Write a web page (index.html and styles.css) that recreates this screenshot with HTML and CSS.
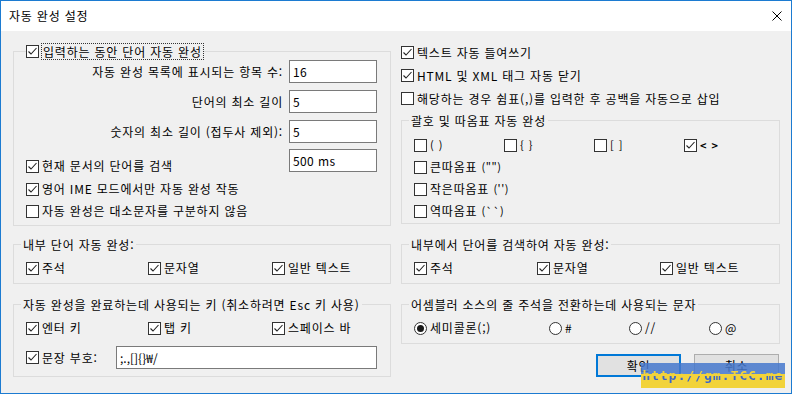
FILE: index.html
```html
<!DOCTYPE html>
<html lang="ko">
<head>
<meta charset="utf-8">
<title>자동 완성 설정</title>
<link rel="stylesheet" href="styles.css">
</head>
<body>
<div class="window">
  <div class="titlebar">
    <span class="title">자동 완성 설정</span>
    <span class="close"><svg width="10" height="10" viewBox="0 0 10 10"><path d="M0.5 0.5 L9.5 9.5 M9.5 0.5 L0.5 9.5" stroke="#000" stroke-width="1" fill="none"/></svg></span>
  </div>
  <div class="body">
    <div class="col left">
      <div class="group g1">
        <div class="legend legend-cb">
          <span class="box"><svg width="11" height="11" viewBox="0 0 11 11"><path d="M1.5 5.5 L4 8 L9.5 2" stroke="#222" stroke-width="1.1" fill="none"/></svg></span>
          <span class="focus">입력하는 동안 단어 자동 완성</span>
        </div>
        <div class="field"><span class="flabel">자동 완성 목록에 표시되는 항목 수:</span><span class="input">16</span></div>
        <div class="field gap7"><span class="flabel">단어의 최소 길이</span><span class="input">5</span></div>
        <div class="field gap7"><span class="flabel">숫자의 최소 길이 (접두사 제외):</span><span class="input">5</span></div>
        <div class="field split">
          <label class="cbrow low"><span class="box"><svg width="11" height="11" viewBox="0 0 11 11"><path d="M1.5 5.5 L4 8 L9.5 2" stroke="#222" stroke-width="1.1" fill="none"/></svg></span><span class="txt">현재 문서의 단어를 검색</span></label>
          <span class="input">500 ms</span>
        </div>
        <label class="cbrow r22 first"><span class="box"><svg width="11" height="11" viewBox="0 0 11 11"><path d="M1.5 5.5 L4 8 L9.5 2" stroke="#222" stroke-width="1.1" fill="none"/></svg></span><span class="txt">영어 IME 모드에서만 자동 완성 작동</span></label>
        <label class="cbrow r22"><span class="box"></span><span class="txt">자동 완성은 대소문자를 구분하지 않음</span></label>
      </div>

      <div class="group g2">
        <div class="legend">내부 단어 자동 완성:</div>
        <div class="opts">
          <label class="cbrow w122"><span class="box"><svg width="11" height="11" viewBox="0 0 11 11"><path d="M1.5 5.5 L4 8 L9.5 2" stroke="#222" stroke-width="1.1" fill="none"/></svg></span><span class="txt">주석</span></label>
          <label class="cbrow w124"><span class="box"><svg width="11" height="11" viewBox="0 0 11 11"><path d="M1.5 5.5 L4 8 L9.5 2" stroke="#222" stroke-width="1.1" fill="none"/></svg></span><span class="txt">문자열</span></label>
          <label class="cbrow"><span class="box"><svg width="11" height="11" viewBox="0 0 11 11"><path d="M1.5 5.5 L4 8 L9.5 2" stroke="#222" stroke-width="1.1" fill="none"/></svg></span><span class="txt">일반 텍스트</span></label>
        </div>
      </div>

      <div class="group g3">
        <div class="legend">자동 완성을 완료하는데 사용되는 키 (취소하려면 Esc 키 사용)</div>
        <div class="opts">
          <label class="cbrow w122"><span class="box"><svg width="11" height="11" viewBox="0 0 11 11"><path d="M1.5 5.5 L4 8 L9.5 2" stroke="#222" stroke-width="1.1" fill="none"/></svg></span><span class="txt">엔터 키</span></label>
          <label class="cbrow w124"><span class="box"><svg width="11" height="11" viewBox="0 0 11 11"><path d="M1.5 5.5 L4 8 L9.5 2" stroke="#222" stroke-width="1.1" fill="none"/></svg></span><span class="txt">탭 키</span></label>
          <label class="cbrow"><span class="box"><svg width="11" height="11" viewBox="0 0 11 11"><path d="M1.5 5.5 L4 8 L9.5 2" stroke="#222" stroke-width="1.1" fill="none"/></svg></span><span class="txt">스페이스 바</span></label>
        </div>
        <div class="punct">
          <label class="cbrow w90"><span class="box"><svg width="11" height="11" viewBox="0 0 11 11"><path d="M1.5 5.5 L4 8 L9.5 2" stroke="#222" stroke-width="1.1" fill="none"/></svg></span><span class="txt">문장 부호:</span></label>
          <span class="input wide mono">;.,[]{}₩/</span>
        </div>
      </div>
    </div>

    <div class="col right">
      <label class="cbrow r23"><span class="box"><svg width="11" height="11" viewBox="0 0 11 11"><path d="M1.5 5.5 L4 8 L9.5 2" stroke="#222" stroke-width="1.1" fill="none"/></svg></span><span class="txt">텍스트 자동 들여쓰기</span></label>
      <label class="cbrow r23"><span class="box"><svg width="11" height="11" viewBox="0 0 11 11"><path d="M1.5 5.5 L4 8 L9.5 2" stroke="#222" stroke-width="1.1" fill="none"/></svg></span><span class="txt">HTML 및 XML 태그 자동 닫기</span></label>
      <label class="cbrow r23"><span class="box"></span><span class="txt">해당하는 경우 쉼표(,)를 입력한 후 공백을 자동으로 삽입</span></label>

      <div class="group rg1">
        <div class="legend">괄호 및 따옴표 자동 완성</div>
        <div class="opts brk">
          <label class="cbrow w90"><span class="box"></span><span class="txt small">( )</span></label>
          <label class="cbrow w90"><span class="box"></span><span class="txt small">{ }</span></label>
          <label class="cbrow w90"><span class="box"></span><span class="txt small">[ ]</span></label>
          <label class="cbrow"><span class="box"><svg width="11" height="11" viewBox="0 0 11 11"><path d="M1.5 5.5 L4 8 L9.5 2" stroke="#222" stroke-width="1.1" fill="none"/></svg></span><span class="txt small bold">&lt; &gt;</span></label>
        </div>
        <label class="cbrow r22"><span class="box"></span><span class="txt">큰따옴표 <span class="q">("")</span></span></label>
        <label class="cbrow r22"><span class="box"></span><span class="txt">작은따옴표 <span class="q">('')</span></span></label>
        <label class="cbrow r22"><span class="box"></span><span class="txt">역따옴표 <span class="q">(``)</span></span></label>
      </div>

      <div class="group rg2">
        <div class="legend">내부에서 단어를 검색하여 자동 완성:</div>
        <div class="opts">
          <label class="cbrow w123"><span class="box"><svg width="11" height="11" viewBox="0 0 11 11"><path d="M1.5 5.5 L4 8 L9.5 2" stroke="#222" stroke-width="1.1" fill="none"/></svg></span><span class="txt">주석</span></label>
          <label class="cbrow w123"><span class="box"><svg width="11" height="11" viewBox="0 0 11 11"><path d="M1.5 5.5 L4 8 L9.5 2" stroke="#222" stroke-width="1.1" fill="none"/></svg></span><span class="txt">문자열</span></label>
          <label class="cbrow"><span class="box"><svg width="11" height="11" viewBox="0 0 11 11"><path d="M1.5 5.5 L4 8 L9.5 2" stroke="#222" stroke-width="1.1" fill="none"/></svg></span><span class="txt">일반 텍스트</span></label>
        </div>
      </div>

      <div class="group rg3">
        <div class="legend">어셈블러 소스의 줄 주석을 전환하는데 사용되는 문자</div>
        <div class="opts">
          <label class="cbrow w135"><span class="radio on"></span><span class="txt">세미콜론(;)</span></label>
          <label class="cbrow w80"><span class="radio"></span><span class="txt">#</span></label>
          <label class="cbrow w80"><span class="radio"></span><span class="txt">//</span></label>
          <label class="cbrow"><span class="radio"></span><span class="txt">@</span></label>
        </div>
      </div>

      <div class="buttons">
        <span class="btn default">확인</span>
        <span class="btn">취소</span>
      </div>
    </div>
  </div>
  <div class="watermark"><span>http://gm.TCC.me</span></div>
</div>
</body>
</html>
```

FILE: styles.css
```css
* { box-sizing: border-box; }
html, body { margin: 0; padding: 0; }
body {
  width: 792px;
  height: 394px;
  font-family: "Noto Sans CJK KR", "Noto Sans", sans-serif;
  font-size: 12px;
  line-height: 16px;
  letter-spacing: 0.8px;
  color: #000;
  background: #fff;
  overflow: hidden;
}
.window {
  position: relative;
  width: 792px;
  height: 394px;
  border: 1px solid #1c7bd1;
  background: #f0f0f0;
  display: flex;
  flex-direction: column;
}
.titlebar {
  height: 30px;
  flex: none;
  background: #fff;
  display: flex;
  align-items: center;
  justify-content: space-between;
  padding: 0 9px 0 8px;
}
.title { font-size: 12px; }
.close { display: flex; width: 10px; height: 10px; }

.body {
  flex: 1;
  display: flex;
  gap: 10px;
  padding: 0 10px 0 12px;
}
.col { display: flex; flex-direction: column; }
.col.left { width: 378px; padding-top: 20px; }
.col.right { width: 379px; padding-top: 10px; }

.group {
  border: 1px solid #dcdcdc;
  padding: 0 13px 0 12px;
  display: flex;
  flex-direction: column;
}
.legend {
  margin-top: -9px;
  height: 17px;
  width: max-content;
  display: flex;
  align-items: center;
  background: #f0f0f0;
  padding: 0 2px;
  margin-left: -5px;
  white-space: nowrap;
}
.legend-cb { padding: 0; margin-left: 0; }
.focus {
  margin-left: 2px;
  height: 17px;
  border: 1px dotted #333;
  padding: 0 1px;
  display: flex;
  align-items: center;
}

.box {
  width: 13px;
  height: 13px;
  flex: none;
  border: 1px solid #333;
  background: #fff;
  display: flex;
  align-items: center;
  justify-content: center;
}
.box svg { display: block; }
.radio {
  width: 13px;
  height: 13px;
  flex: none;
  border: 1px solid #333;
  border-radius: 50%;
  background: #fff;
  display: flex;
  align-items: center;
  justify-content: center;
}
.radio.on::after {
  content: "";
  width: 7px;
  height: 7px;
  border-radius: 50%;
  background: #1a1a1a;
}

.cbrow {
  display: flex;
  align-items: center;
  height: 20px;
  white-space: nowrap;
}
.cbrow .txt { margin-left: 3px; }
.cbrow.r22 { height: 22px; }
.cbrow.r23 { height: 23px; }
.cbrow.low { height: 14px; margin-bottom: -1px; }
.cbrow.first { margin-top: 6px; }
.w80 { width: 80px; }
.w90 { width: 90px; }
.w122 { width: 122px; }
.w123 { width: 123px; }
.w124 { width: 124px; }
.w135 { width: 135px; }
.txt.small { font-size: 11px; letter-spacing: 1px; }
.txt.bold { font-weight: bold; }
.q { font-size: 11px; letter-spacing: 0.5px; }

.field {
  display: flex;
  align-items: center;
  justify-content: flex-end;
  height: 23px;
}
.field.gap7 { margin-top: 7px; }
.field.split {
  margin-top: 6px;
  justify-content: space-between;
  align-items: flex-end;
}
.flabel { margin-right: 6px; white-space: nowrap; }
.input {
  width: 88px;
  height: 23px;
  flex: none;
  border: 1px solid #7a7a7a;
  background: #fff;
  padding-left: 3px;
  display: flex;
  align-items: center;
  letter-spacing: 0.4px;
}
.input.wide { width: 261px; }
.input.mono { letter-spacing: 0; }

.g1 { padding-bottom: 3px; }
.g2 { margin-top: 18px; padding-bottom: 5px; }
.g3 { margin-top: 20px; padding-bottom: 7px; }
.opts { display: flex; margin-top: 5px; }
.punct { display: flex; align-items: center; height: 23px; margin-top: 8px; }

.rg1 { margin-top: 10px; padding-bottom: 1px; }
.rg1 .opts { margin-top: 5px; }
.rg1 .opts .cbrow { height: 22px; }
.rg2 { margin-top: 20px; padding-bottom: 5px; }
.rg3 { margin-top: 20px; padding-bottom: 5px; }

.buttons {
  display: flex;
  justify-content: flex-end;
  gap: 13px;
  margin-top: 10px;
  margin-right: 1px;
}
.btn {
  width: 85px;
  height: 23px;
  background: #e1e1e1;
  border: 1px solid #adadad;
  display: flex;
  align-items: center;
  justify-content: center;
}
.btn.default { border: 2px solid #0078d7; }

.watermark {
  position: absolute;
  left: 640px;
  top: 362px;
  width: 144px;
  height: 25px;
  background: linear-gradient(to bottom, rgba(70, 120, 205, 0.85) 0 45%, #f2d33a 45% 100%);
  display: flex;
  align-items: center;
  justify-content: center;
}
.watermark span {
  font-family: "DejaVu Sans Mono", monospace;
  font-size: 13px;
  font-weight: bold;
  letter-spacing: 1px;
  background: linear-gradient(to bottom, #f2d33a 0 50%, #3b66c9 50% 100%);
  -webkit-background-clip: text;
  background-clip: text;
  color: transparent;
}
```
